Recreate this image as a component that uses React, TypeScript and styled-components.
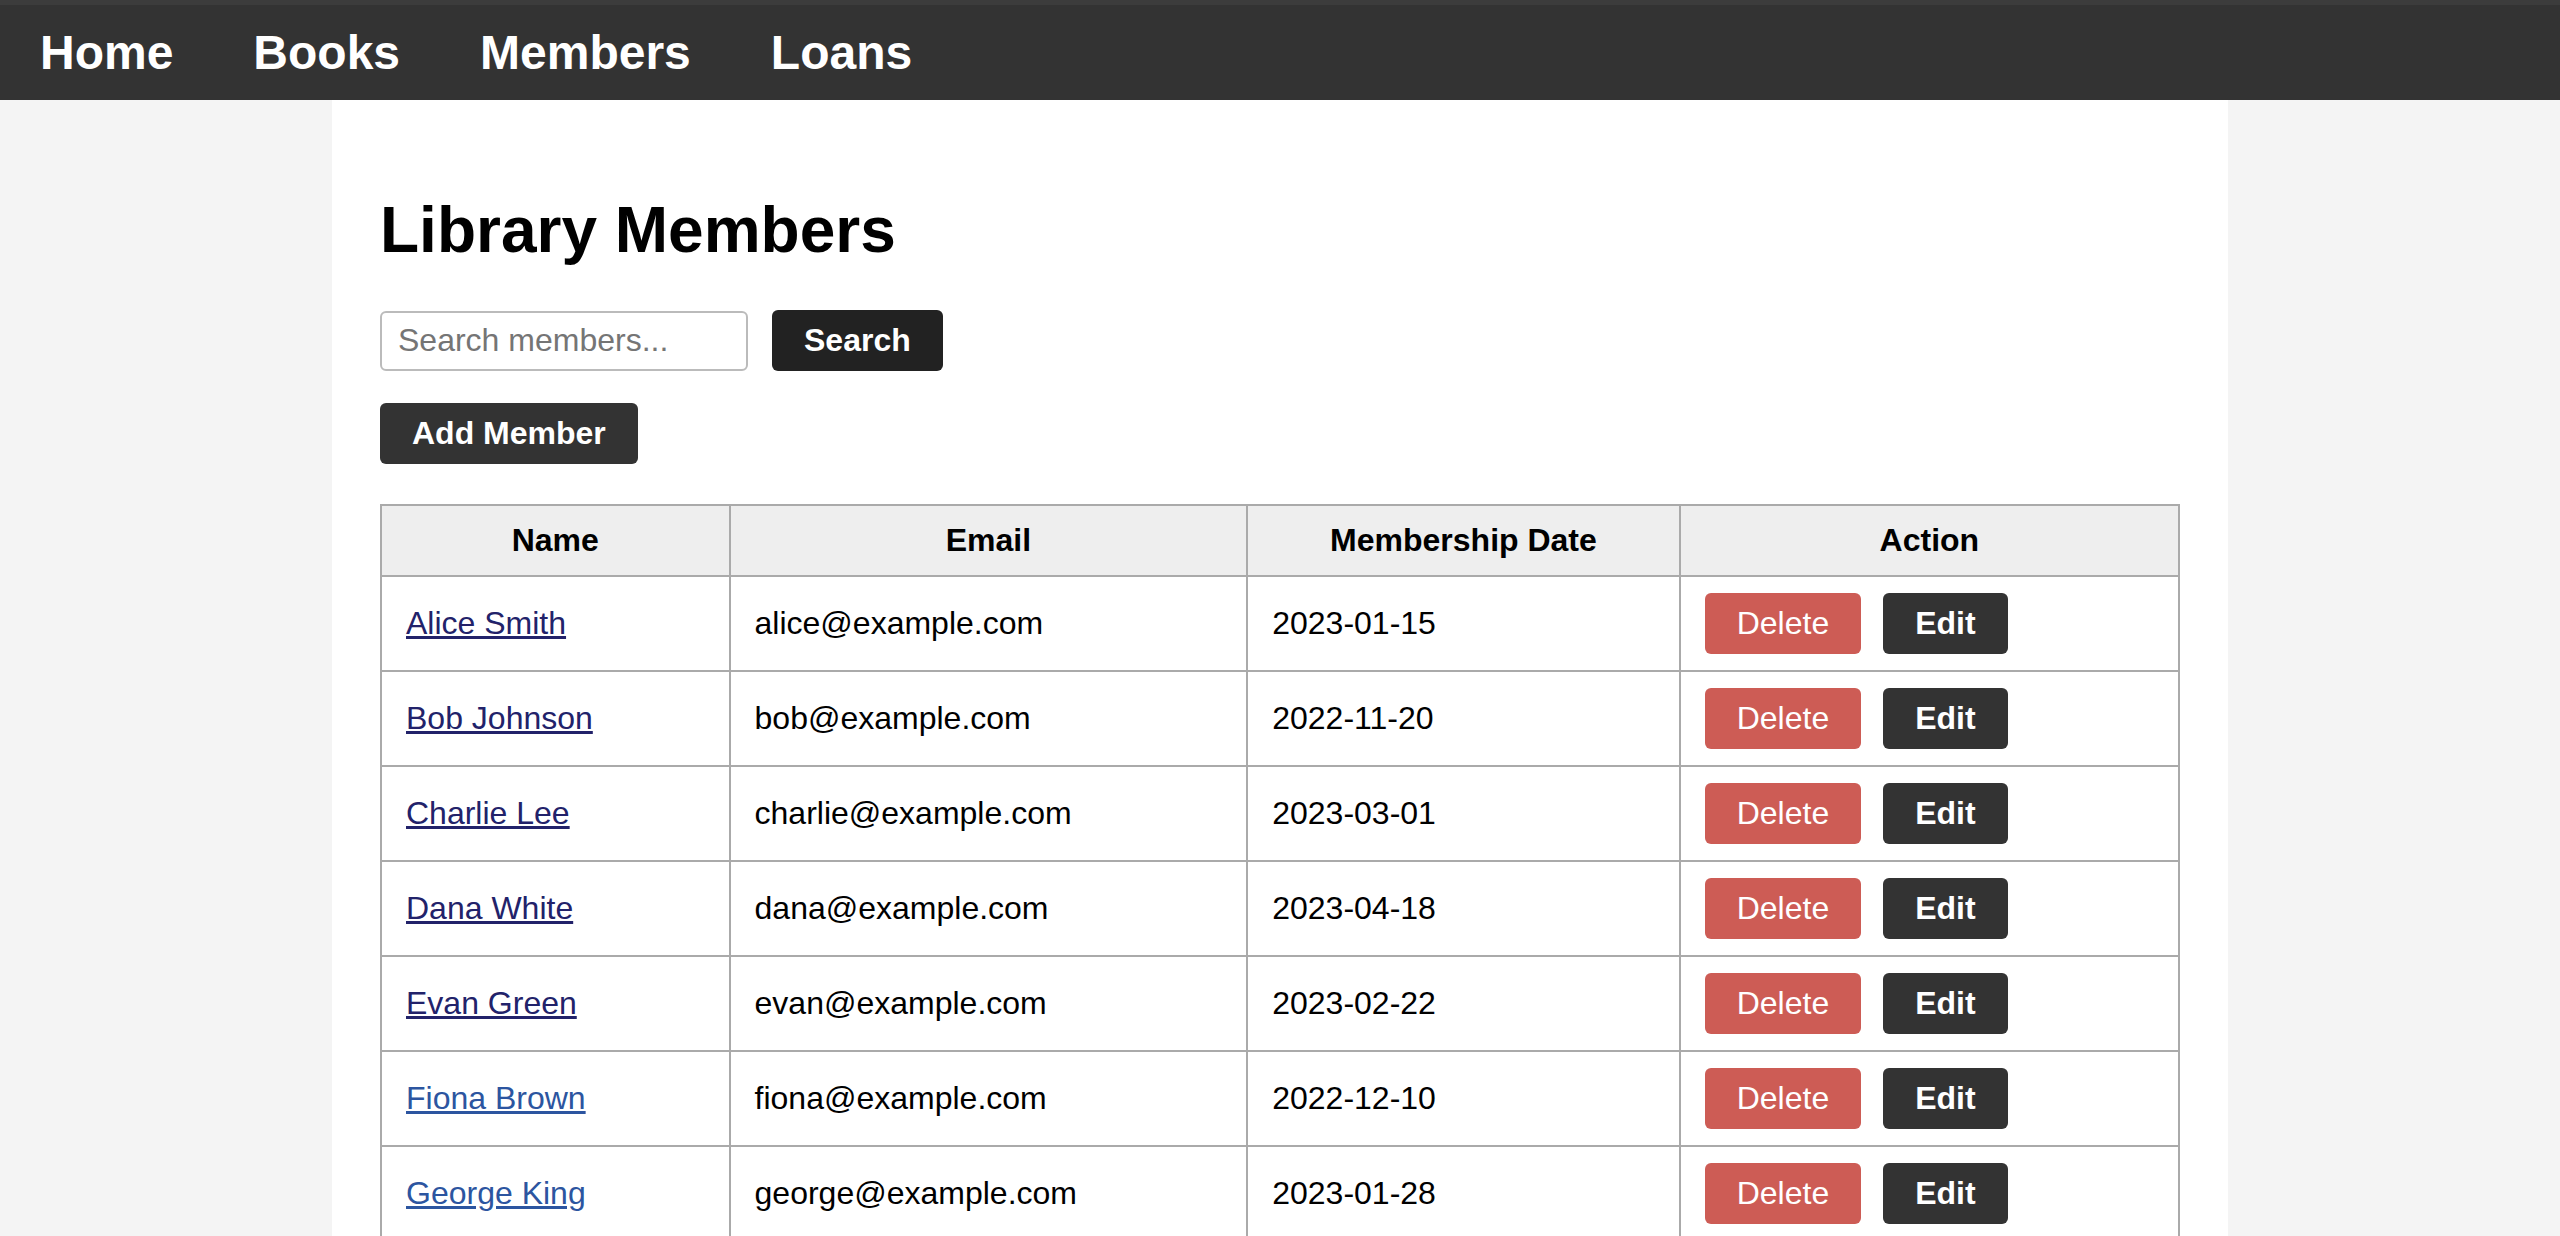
import React, { useState, ChangeEvent } from 'react'
import styled, { createGlobalStyle } from 'styled-components'

const GlobalStyle = createGlobalStyle`
    html, body {
        margin: 0;
        padding: 0;
        background: #f4f4f4;
        font-family: "Liberation Sans", Arial, sans-serif;
    }
    * {
        box-sizing: border-box;
    }
`

const NavBar = styled.nav`
    display: flex;
    align-items: center;
    height: 100px;
    background: #333333;
    border-top: 5px solid #3c3c3c;
    >a{
        padding: 0 40px;
        color: #ffffff;
        font-size: 48px;
        font-weight: bold;
        text-decoration: none;
        line-height: 95px;
    }
`

const Container = styled.main`
    width: 1896px;
    margin: 0 auto;
    min-height: calc(100vh - 100px);
    background: #ffffff;
    padding: 50px 48px 48px;
    >h1{
        margin: 43px 0 43px;
        font-size: 64px;
        font-weight: bold;
        color: #000;
    }
`

const SearchRow = styled.form`
    display: flex;
    align-items: center;
    gap: 24px;
    margin-bottom: 32px;
    >input{
        width: 368px;
        height: 60px;
        padding: 0 16px;
        border: 2px solid #bbbbbb;
        border-radius: 6px;
        font-size: 32px;
        font-family: "Liberation Sans", Arial, sans-serif;
        color: #000;
        outline: none;
        &::placeholder{
            color: #757575;
        }
    }
`

const Button = styled.button<{ $variant?: 'dark' | 'danger' | 'black' }>`
    padding: 12px 32px;
    border: none;
    border-radius: 6px;
    font-family: "Liberation Sans", Arial, sans-serif;
    font-size: 32px;
    line-height: 37px;
    color: #ffffff;
    cursor: pointer;
    font-weight: ${p => (p.$variant === 'danger' ? 'normal' : 'bold')};
    background: ${p => (p.$variant === 'danger' ? '#cd5c55' : p.$variant === 'black' ? '#222222' : '#333333')};
`

const AddButton = styled(Button)`
    margin-bottom: 40px;
`

const Table = styled.table`
    width: 1800px;
    border-collapse: collapse;
    font-size: 32px;
    th, td{
        border: 2px solid #aaaaaa;
        padding: 16px 24px;
        line-height: 37px;
    }
    th{
        background: #eeeeee;
        font-weight: bold;
        text-align: center;
    }
    td{
        text-align: left;
        color: #000;
    }
    td>button + button{
        margin-left: 22px;
    }
`

const NameLink = styled.a<{ $visited?: boolean }>`
    color: ${p => (p.$visited ? '#22226a' : '#2c55a0')};
    text-decoration: underline;
`

type Member = {
    name: string
    email: string
    date: string
    visited: boolean
}

const initialMembers: Member[] = [
    { name: 'Alice Smith', email: 'alice@example.com', date: '2023-01-15', visited: true },
    { name: 'Bob Johnson', email: 'bob@example.com', date: '2022-11-20', visited: true },
    { name: 'Charlie Lee', email: 'charlie@example.com', date: '2023-03-01', visited: true },
    { name: 'Dana White', email: 'dana@example.com', date: '2023-04-18', visited: true },
    { name: 'Evan Green', email: 'evan@example.com', date: '2023-02-22', visited: true },
    { name: 'Fiona Brown', email: 'fiona@example.com', date: '2022-12-10', visited: false },
    { name: 'George King', email: 'george@example.com', date: '2023-01-28', visited: false },
]

const App = () => {
    const [query, setQuery] = useState('')
    const [members, setMembers] = useState(initialMembers)
    function handleQueryChange(e: ChangeEvent<HTMLInputElement>) {
        setQuery(e.target.value)
    }
    function handleDelete(name: string) {
        setMembers(members.filter(m => m.name !== name))
    }
    return (
        <>
            <GlobalStyle />
            <NavBar>
                <a href="#">Home</a>
                <a href="#">Books</a>
                <a href="#">Members</a>
                <a href="#">Loans</a>
            </NavBar>
            <Container>
                <h1>Library Members</h1>
                <SearchRow onSubmit={e => e.preventDefault()}>
                    <input type="text" placeholder="Search members..." value={query} onChange={handleQueryChange} />
                    <Button $variant="black" type="submit">Search</Button>
                </SearchRow>
                <AddButton>Add Member</AddButton>
                <Table>
                    <colgroup>
                        <col style={{ width: 349 }} />
                        <col style={{ width: 518 }} />
                        <col style={{ width: 433 }} />
                        <col style={{ width: 500 }} />
                    </colgroup>
                    <thead>
                        <tr>
                            <th>Name</th>
                            <th>Email</th>
                            <th>Membership Date</th>
                            <th>Action</th>
                        </tr>
                    </thead>
                    <tbody>
                        {members.map(m => (
                            <tr key={m.name}>
                                <td><NameLink href="#" $visited={m.visited}>{m.name}</NameLink></td>
                                <td>{m.email}</td>
                                <td>{m.date}</td>
                                <td>
                                    <Button $variant="danger" onClick={() => handleDelete(m.name)}>Delete</Button>
                                    <Button>Edit</Button>
                                </td>
                            </tr>
                        ))}
                    </tbody>
                </Table>
            </Container>
        </>
    )
}

export default App
